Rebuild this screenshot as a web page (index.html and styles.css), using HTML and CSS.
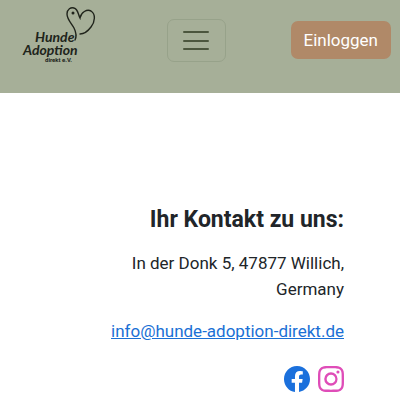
FILE: index.html
```
<!DOCTYPE html>
<html lang="de">
<head>
<meta charset="utf-8">
<meta name="viewport" content="width=device-width, initial-scale=1">
<title>Hunde Adoption direkt e.V.</title>
<link rel="stylesheet" href="styles.css">
</head>
<body>
<header class="navbar">
  <a class="brand" href="#" aria-label="Hunde Adoption direkt e.V.">
    <svg class="logo" viewBox="0 0 81 63" aria-hidden="true">
      <path class="heart" d="M55 35C57 31 56 27 54 23C51 18 47 14 47 9C47 4 51 2 54 3C58 4 58 9 60 13C61 7 67 4 71 6C76 9 75 17 71 22C68 26 64 29 60 29"/>
      <circle class="eye" cx="53" cy="8" r="1.5"/>
      <text class="script" x="15" y="37">Hunde</text>
      <text class="script" x="3" y="50">Adoption</text>
      <text class="small" x="25" y="57">direkt e.V.</text>
    </svg>
  </a>
  <button class="toggler" type="button" aria-label="Navigation">
    <svg class="bars" viewBox="0 0 34 34" aria-hidden="true"><path d="M5 8h24M5 17h24M5 25h24"/></svg>
  </button>
  <button class="login" type="button">Einloggen</button>
</header>
<main class="contact">
  <h2>Ihr Kontakt zu uns:</h2>
  <p>In der Donk 5, 47877 Willich, Germany</p>
  <p><a href="mailto:info@hunde-adoption-direkt.de">info@hunde-adoption-direkt.de</a></p>
  <div class="social">
    <a class="facebook" href="#" aria-label="Facebook"><svg viewBox="0 0 16 16" aria-hidden="true"><path d="M16 8.049c0-4.446-3.582-8.05-8-8.05C3.58 0-.002 3.603-.002 8.05c0 4.017 2.926 7.347 6.75 7.951v-5.625h-2.03V8.05H6.75V6.275c0-2.017 1.195-3.131 3.022-3.131.876 0 1.791.157 1.791.157v1.98h-1.009c-.993 0-1.303.621-1.303 1.258v1.51h2.218l-.354 2.326H9.25V16c3.824-.604 6.75-3.934 6.75-7.951"/></svg></a>
    <a class="instagram" href="#" aria-label="Instagram"><svg viewBox="0 0 16 16" aria-hidden="true"><path d="M8 0C5.829 0 5.556.01 4.703.048 3.85.088 3.269.222 2.76.42a3.9 3.9 0 0 0-1.417.923A3.9 3.9 0 0 0 .42 2.76C.222 3.268.087 3.85.048 4.7.01 5.555 0 5.827 0 8.001c0 2.172.01 2.444.048 3.297.04.852.174 1.433.372 1.942.205.526.478.972.923 1.417.444.445.89.719 1.416.923.51.198 1.09.333 1.942.372C5.555 15.99 5.827 16 8 16s2.444-.01 3.298-.048c.851-.04 1.434-.174 1.943-.372a3.9 3.9 0 0 0 1.416-.923c.445-.445.718-.891.923-1.417.197-.509.332-1.09.372-1.942C15.99 10.445 16 10.173 16 8s-.01-2.445-.048-3.299c-.04-.851-.175-1.433-.372-1.941a3.9 3.9 0 0 0-.923-1.417A3.9 3.9 0 0 0 13.24.42c-.51-.198-1.092-.333-1.943-.372C10.443.01 10.172 0 7.998 0zm-.717 1.442h.718c2.136 0 2.389.007 3.232.046.78.035 1.204.166 1.486.275.373.145.64.319.92.599s.453.546.598.92c.11.281.24.705.275 1.485.039.843.047 1.096.047 3.231s-.008 2.389-.047 3.232c-.035.78-.166 1.203-.275 1.485a2.5 2.5 0 0 1-.599.919c-.28.28-.546.453-.92.598-.28.11-.704.24-1.485.276-.843.038-1.096.047-3.232.047s-2.39-.009-3.233-.047c-.78-.036-1.203-.166-1.485-.276a2.5 2.5 0 0 1-.92-.598 2.5 2.5 0 0 1-.6-.92c-.109-.281-.24-.705-.275-1.485-.038-.843-.046-1.096-.046-3.233s.008-2.388.046-3.231c.036-.78.166-1.204.276-1.486.145-.373.319-.64.599-.92s.546-.453.92-.598c.282-.11.705-.24 1.485-.276.738-.034 1.024-.044 2.515-.045zm4.988 1.328a.96.96 0 1 0 0 1.92.96.96 0 0 0 0-1.92m-4.27 1.122a4.109 4.109 0 1 0 0 8.217 4.109 4.109 0 0 0 0-8.217m0 1.441a2.667 2.667 0 1 1 0 5.334 2.667 2.667 0 0 1 0-5.334"/></svg></a>
  </div>
</main>
</body>
</html>
```
FILE: styles.css
```
* { box-sizing: border-box; }

body {
  margin: 0;
  background: #fff;
  color: #212529;
  font-family: Roboto, sans-serif;
  font-size: 17px;
  line-height: 26px;
}

.navbar {
  display: flex;
  justify-content: space-between;
  align-items: flex-start;
  padding: 5px 9px 25px 20px;
  background: #a6af98;
}

.brand { display: block; }

.logo {
  display: block;
  width: 81px;
  height: 63px;
  overflow: visible;
}

.heart {
  fill: none;
  stroke: #20241b;
  stroke-width: 1.4;
  stroke-linecap: round;
}

.eye { fill: #20241b; }

.script {
  fill: #20241b;
  font: italic bold 14px Lato, sans-serif;
}

.small {
  fill: #20241b;
  font: bold 6px Roboto, sans-serif;
}

.toggler {
  display: flex;
  align-items: center;
  justify-content: center;
  width: 59px;
  height: 43px;
  margin-top: 14px;
  padding: 0;
  border: 1px solid #97a28a;
  border-radius: 7px;
  background: transparent;
}

.bars {
  width: 34px;
  height: 34px;
  fill: none;
  stroke: #4c563e;
  stroke-width: 2;
  stroke-linecap: round;
}

.login {
  margin-top: 16px;
  padding: 6px 13px 6px 12px;
  border: 0;
  border-radius: 7px;
  background: #b08968;
  color: #fff;
  font: inherit;
}

.contact {
  padding: 111px 56px 0 104px;
  text-align: right;
}

h2 {
  margin: 0 0 14px;
  font-size: 23px;
  line-height: 32px;
  font-weight: 700;
}

p { margin: 0 0 16px; }

p a { color: #1a70d5; }

.social {
  display: flex;
  justify-content: flex-end;
  gap: 8px;
  padding-top: 6px;
}

.social svg {
  display: block;
  width: 26px;
  height: 26px;
  fill: currentColor;
}

.facebook { color: #1b70dc; }
.instagram { color: #df4db8; }
```
